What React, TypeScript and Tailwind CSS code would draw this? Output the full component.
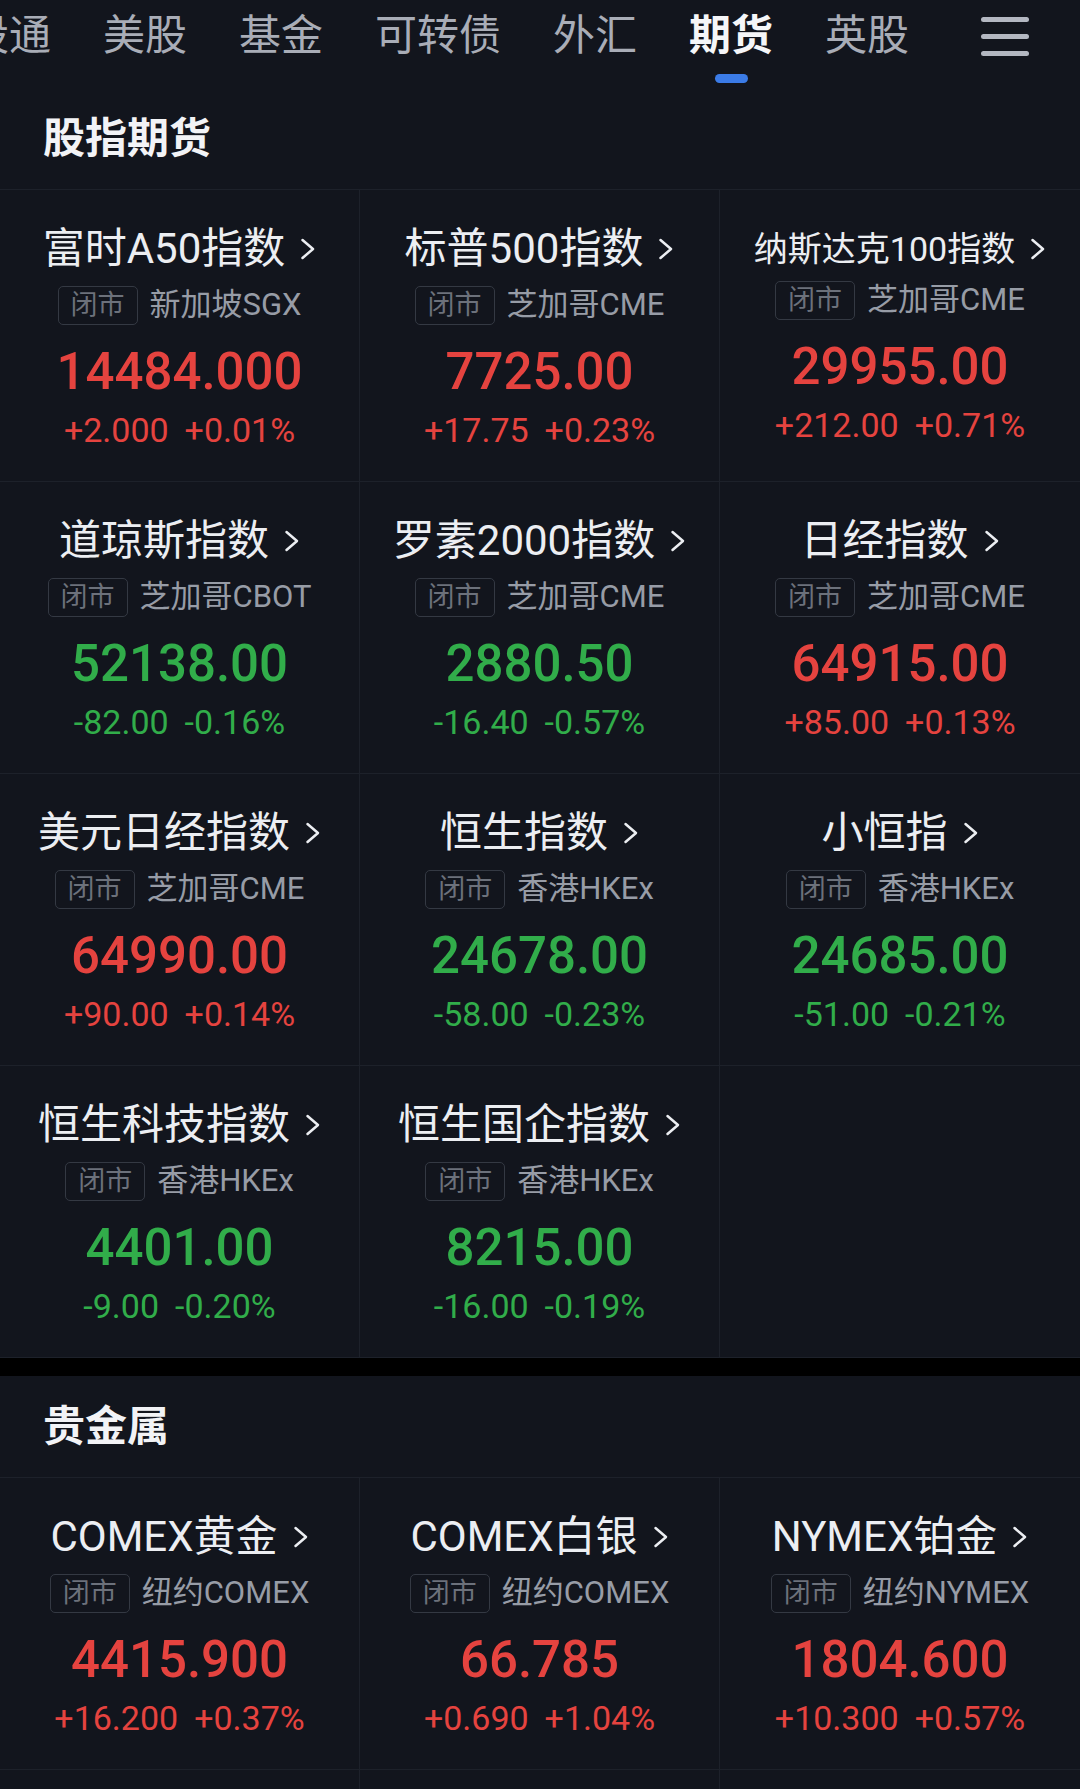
import React from "react";

type Quote = {
  name: string;
  exchange: string;
  price: string;
  change: string;
  percent: string;
  small?: boolean;
};

const indexFutures: (Quote | null)[] = [
  { name: "富时A50指数", exchange: "新加坡SGX", price: "14484.000", change: "+2.000", percent: "+0.01%" },
  { name: "标普500指数", exchange: "芝加哥CME", price: "7725.00", change: "+17.75", percent: "+0.23%" },
  { name: "纳斯达克100指数", exchange: "芝加哥CME", price: "29955.00", change: "+212.00", percent: "+0.71%", small: true },
  { name: "道琼斯指数", exchange: "芝加哥CBOT", price: "52138.00", change: "-82.00", percent: "-0.16%" },
  { name: "罗素2000指数", exchange: "芝加哥CME", price: "2880.50", change: "-16.40", percent: "-0.57%" },
  { name: "日经指数", exchange: "芝加哥CME", price: "64915.00", change: "+85.00", percent: "+0.13%" },
  { name: "美元日经指数", exchange: "芝加哥CME", price: "64990.00", change: "+90.00", percent: "+0.14%" },
  { name: "恒生指数", exchange: "香港HKEx", price: "24678.00", change: "-58.00", percent: "-0.23%" },
  { name: "小恒指", exchange: "香港HKEx", price: "24685.00", change: "-51.00", percent: "-0.21%" },
  { name: "恒生科技指数", exchange: "香港HKEx", price: "4401.00", change: "-9.00", percent: "-0.20%" },
  { name: "恒生国企指数", exchange: "香港HKEx", price: "8215.00", change: "-16.00", percent: "-0.19%" },
  null,
];

const metals: (Quote | null)[] = [
  { name: "COMEX黄金", exchange: "纽约COMEX", price: "4415.900", change: "+16.200", percent: "+0.37%" },
  { name: "COMEX白银", exchange: "纽约COMEX", price: "66.785", change: "+0.690", percent: "+1.04%" },
  { name: "NYMEX铂金", exchange: "纽约NYMEX", price: "1804.600", change: "+10.300", percent: "+0.57%" },
  null,
  null,
  null,
];

const tabs = ["港股通", "美股", "基金", "可转债", "外汇", "期货", "英股"];

function Chevron() {
  return (
    <svg width="16" height="22" viewBox="0 0 16 22" className="ml-[15px] shrink-0" fill="none">
      <polyline points="2.5,2 13,11 2.5,20" stroke="#eceef2" strokeWidth="2.5" strokeLinecap="round" strokeLinejoin="round" />
    </svg>
  );
}

function QuoteCell({ q, last }: { q: Quote | null; last: boolean }) {
  const border = `h-[292px] border-b border-[#1d212a] ${last ? "" : "border-r"}`;
  if (!q) return <div className={border} />;
  const up = q.change.startsWith("+");
  const color = up ? "text-[#e5433f]" : "text-[#31ad4a]";
  return (
    <div className={`${border} flex flex-col items-center justify-center pt-[2px]`}>
      <div className="flex items-center">
        <span className={`text-[#eceef2] ${q.small ? "text-[34px] leading-[40px]" : "text-[42px] leading-[50px]"}`}>{q.name}</span>
        <Chevron />
      </div>
      <div className="flex items-center mt-[12px] h-[39px]">
        <span className="h-[39px] px-[12px] flex items-center border border-[#343943] rounded-[5px] text-[27px] text-[#6c717b]">闭市</span>
        <span className="ml-[12px] text-[31px] text-[#979ca6]">{q.exchange}</span>
      </div>
      <div className={`mt-[16px] text-[51px] leading-[62px] font-medium ${color}`}>{q.price}</div>
      <div className={`mt-[7px] flex gap-[16px] text-[34px] leading-[40px] ${color}`}>
        <span>{q.change}</span>
        <span>{q.percent}</span>
      </div>
    </div>
  );
}

function Section({ title, items }: { title: string; items: (Quote | null)[] }) {
  return (
    <div>
      <div className="h-[101px] flex items-center px-[43px]">
        <h2 className="text-[42px] font-bold text-[#f2f3f6]">{title}</h2>
      </div>
      <div className="grid grid-cols-3 border-t border-[#1d212a]">
        {items.map((q, i) => (
          <QuoteCell key={i} q={q} last={i % 3 === 2} />
        ))}
      </div>
    </div>
  );
}

export default function App() {
  return (
    <div className="w-[1080px] h-[1789px] overflow-hidden bg-[#12151d] font-[Roboto,'Noto_Sans_CJK_SC',sans-serif]">
      <div className="h-[88px] flex items-start">
        <div className="flex-1 overflow-hidden">
          <div className="flex gap-[52px] ml-[-75px]">
            {tabs.map((t) => {
              const active = t === "期货";
              return (
                <div key={t} className="flex flex-col items-center shrink-0">
                  <span className={`text-[42px] leading-[72px] whitespace-nowrap ${active ? "text-[#f5f6f8] font-bold" : "text-[#a9adb7]"}`}>{t}</span>
                  {active && <span className="mt-[2px] h-[9px] w-[33px] rounded-full bg-[#3b7be6]" />}
                </div>
              );
            })}
          </div>
        </div>
        <div className="w-[48px] mr-[51px] ml-[30px] h-[72px] flex flex-col justify-center gap-[12px]">
          <span className="h-[5px] rounded-full bg-[#b3b7c1]" />
          <span className="h-[5px] rounded-full bg-[#b3b7c1]" />
          <span className="h-[5px] rounded-full bg-[#b3b7c1]" />
        </div>
      </div>
      <Section title="股指期货" items={indexFutures} />
      <div className="h-[18px] bg-black" />
      <Section title="贵金属" items={metals} />
    </div>
  );
}
